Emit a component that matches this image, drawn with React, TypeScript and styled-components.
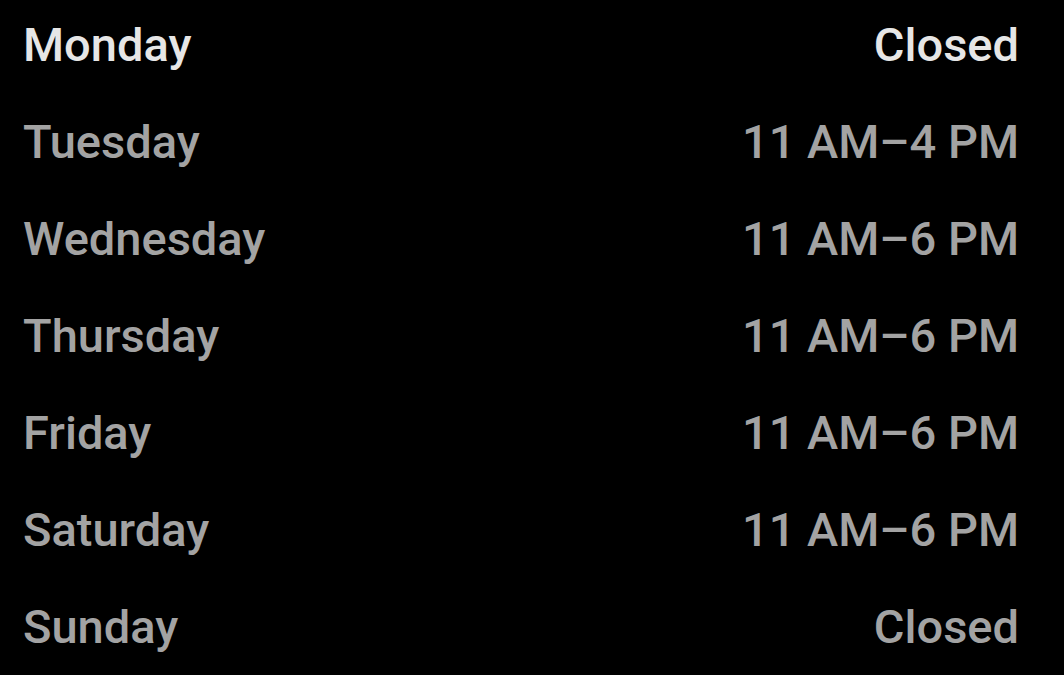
import React from "react";
import styled, { createGlobalStyle } from "styled-components";

const Global = createGlobalStyle`
  html, body { margin: 0; padding: 0; background: #000; }
  body { font-family: Roboto, "Noto Sans", sans-serif; }
`;

const List = styled.div`
  display: flex;
  flex-direction: column;
  gap: 8px;
  padding: 0 45px 0 23px;
  background: #000;
  width: 1064px;
  height: 675px;
  box-sizing: border-box;
`;

const Row = styled.div<{ $current?: boolean }>`
  display: flex;
  justify-content: space-between;
  align-items: baseline;
  font-size: 47px;
  font-weight: 500;
  line-height: 89px;
  color: ${(p) => (p.$current ? "#e6e6e6" : "#a3a3a3")};
`;

const Day = styled.span``;
const Hours = styled.span``;

const data: [string, string][] = [
  ["Monday", "Closed"],
  ["Tuesday", "11 AM–4 PM"],
  ["Wednesday", "11 AM–6 PM"],
  ["Thursday", "11 AM–6 PM"],
  ["Friday", "11 AM–6 PM"],
  ["Saturday", "11 AM–6 PM"],
  ["Sunday", "Closed"],
];

export default function App() {
  return (
    <>
      <Global />
      <List>
        {data.map(([d, h], i) => (
          <Row key={d} $current={i === 0}>
            <Day>{d}</Day>
            <Hours>{h}</Hours>
          </Row>
        ))}
      </List>
    </>
  );
}
